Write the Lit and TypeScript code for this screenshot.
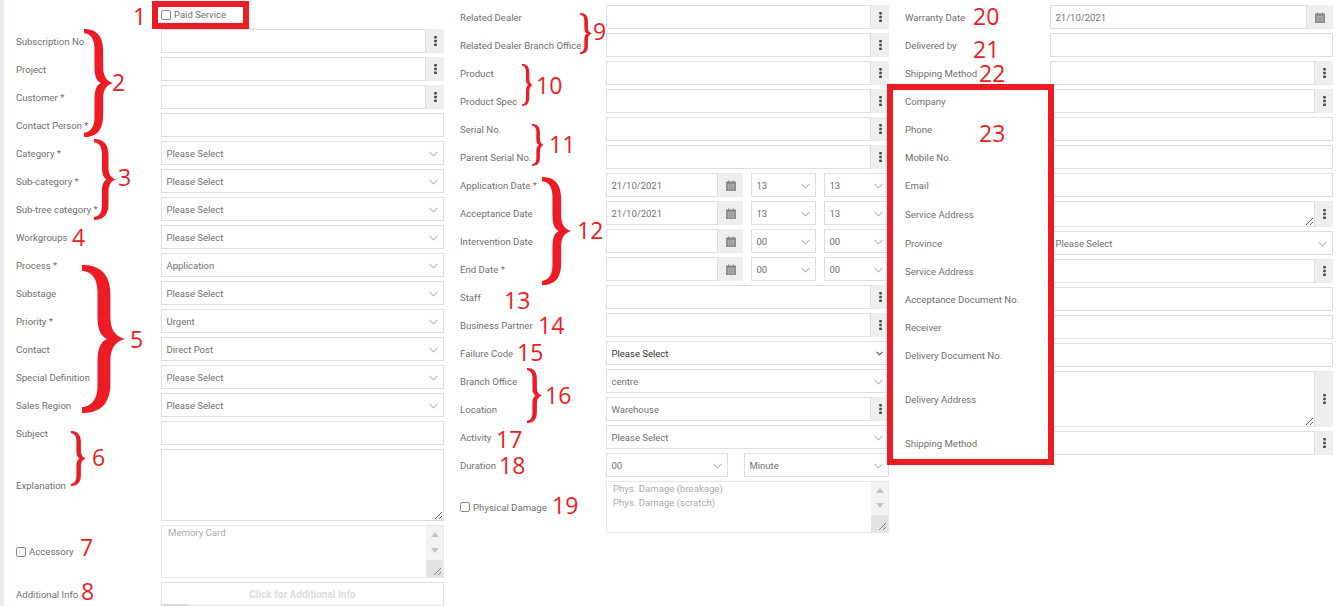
import { LitElement, html, css, svg } from "lit";
import { customElement } from "lit/decorators.js";

type Row = { label: string; kind: string; value?: string; h?: number; check?: boolean; opts?: string[]; a?: string; b?: string };

const r = (label: string, kind: string, value = "", extra: Partial<Row> = {}): Row => ({ label, kind, value, ...extra });

const PS = "Please Select";

const col1: Row[] = [
  r("Subscription No", "more"), r("Project", "more"), r("Customer *", "more"), r("Contact Person *", "text"),
  r("Category *", "select", PS), r("Sub-category *", "select", PS), r("Sub-tree category *", "select", PS),
  r("Workgroups", "select", PS), r("Process *", "select", "Application"), r("Substage", "select", PS),
  r("Priority *", "select", "Urgent"), r("Contact", "select", "Direct Post"), r("Special Definition", "select", PS),
  r("Sales Region", "select", PS), r("Subject", "text"), r("Explanation", "area", "", { h: 72 }),
  r("Accessory", "list", "", { h: 53, check: true, opts: ["Memory Card"] }),
  r("Additional Info", "button", "Click for Additional Info"),
];

const col2: Row[] = [
  r("Related Dealer", "more"), r("Related Dealer Branch Office", "more"), r("Product", "more"), r("Product Spec", "more"),
  r("Serial No.", "more"), r("Parent Serial No.", "more"),
  r("Application Date *", "datetime", "21/10/2021", { a: "13", b: "13" }),
  r("Acceptance Date", "datetime", "21/10/2021", { a: "13", b: "13" }),
  r("Intervention Date", "datetime", "", { a: "00", b: "00" }),
  r("End Date *", "datetime", "", { a: "00", b: "00" }),
  r("Staff", "more"), r("Business Partner", "more"), r("Failure Code", "native", PS),
  r("Branch Office", "select", "centre"), r("Location", "more", "Warehouse"), r("Activity", "select", PS),
  r("Duration", "duration", "", { a: "00", b: "Minute" }),
  r("Physical Damage", "list", "", { h: 52, check: true, opts: ["Phys. Damage (breakage)", "Phys. Damage (scratch)"] }),
];

const col3: Row[] = [
  r("Warranty Date", "date", "21/10/2021"), r("Delivered by", "text"), r("Shipping Method", "more"), r("Company", "more"),
  r("Phone", "text"), r("Mobile No.", "text"), r("Email", "text"),
  r("Service Address", "areamore", "", { h: 26 }), r("Province", "select", PS), r("Service Address", "more"),
  r("Acceptance Document No.", "text"), r("Receiver", "text"), r("Delivery Document No.", "text"),
  r("Delivery Address", "areamore", "", { h: 56 }), r("Shipping Method", "more"),
];

const numbers: [string, number, number][] = [
  ["1", 133, 16], ["2", 112, 82], ["3", 118, 177], ["4", 72, 237], ["5", 130, 339], ["6", 92, 457], ["7", 80, 547], ["8", 81, 591],
  ["9", 593, 31], ["10", 536, 85], ["11", 549, 144], ["12", 577, 230], ["13", 504, 300], ["14", 538, 325], ["15", 517, 352],
  ["16", 545, 395], ["17", 496, 439], ["18", 499, 465], ["19", 552, 505], ["20", 973, 16], ["21", 973, 49], ["22", 979, 73], ["23", 979, 133],
];

const braces: [number, number, number, number][] = [
  [84, 29, 29, 108], [94, 139, 22, 81], [82, 265, 43, 148], [71, 431, 15, 55], [580, 13, 12, 41], [522, 64, 11, 42],
  [532, 124, 12, 42], [542, 177, 29, 108], [527, 368, 15, 55],
];

const bracePath =
  "M0,0 C30,0 66,3 66,20 L66,35 C66,43 75,48 100,50 C75,52 66,57 66,65 L66,80 C66,97 30,100 0,100 L0,96 C18,96 36,92 36,82 L36,66 C36,57 42,52 58,50 C42,48 36,43 36,34 L36,18 C36,8 18,4 0,4 Z";

const chevron = html`<svg class="chev" width="9" height="6" viewBox="0 0 9 6"><path d="M.5 .8 4.500 4.800 8.500 .8" fill="none" stroke="#bdbdbd" stroke-width="1.200"/></svg>`;

const darkChevron = html`<svg class="chevd" width="7" height="5" viewBox="0 0 7 5"><path d="M.5 .8 3.500 3.800 6.500 .8" fill="none" stroke="#555" stroke-width="1.100"/></svg>`;

const dots = html`<svg width="3" height="10" viewBox="0 0 3 10"><g fill="#444"><rect x=".2" y="0" width="2.600" height="2.400" rx=".6"/><rect x=".2" y="3.800" width="2.600" height="2.400" rx=".6"/><rect x=".2" y="7.600" width="2.600" height="2.400" rx=".6"/></g></svg>`;

const cal = html`<svg width="10" height="11" viewBox="0 0 10 11"><path fill="#858585" d="M0 2.200C0 1.700.4 1.400.9 1.400H2V.4h1.200v1H6.800v-1H8v1h1.100c.5 0 .9.3.9.8V10c0 .5-.4 1-.9 1H.9C.4 11 0 10.500 0 10Z"/><path stroke="#ccc" stroke-width=".5" d="M.6 4.200H9.400M.6 6.200H9.400M.6 8.200H9.400M2.700 4V10.700M5 4V10.700M7.300 4V10.700" fill="none"/></svg>`;

const grip = svg`<path d="M1 8 8 1M5 8 8 5" stroke="#666" stroke-width=".8" fill="none"/>`;

@customElement("app-root")
export class AppRoot extends LitElement {
  static styles = css`
    :host { display: block; height: 606px; overflow: hidden; position: relative; background: #fff; font-family: Roboto, "Liberation Sans", sans-serif; font-size: 9.5px; color: #707070; }
    * { box-sizing: border-box; }
    .page { display: flex; height: 606px; border-left: 4px solid #e8ecf3; padding-left: 12px; gap: 16px; }
    .col { width: 428px; display: flex; flex-direction: column; gap: 4px; padding-top: 5px; flex: none; }
    .col.mid { width: 429px; }
    .paid { height: 20px; margin-left: 145px; display: flex; align-items: center; padding-bottom: 1px; }
    .row { display: grid; grid-template-columns: 145px 283px; align-items: center; }
    .mid .row { grid-template-columns: 146px 283px; }
    .lab { white-space: nowrap; display: flex; align-items: center; font-size: 9.600px; }
    .cb { appearance: none; margin: 0 3px 0 0; width: 10px; height: 10px; border: 1px solid #8a8a8a; border-radius: 2px; background: #fff; flex: none; }
    .ctl { height: 24px; display: flex; width: 283px; position: relative; }
    .box { flex: 1; min-width: 0; height: 100%; border: 1px solid #dedede; background: #fff; padding: 0 4.500px; display: flex; align-items: center; color: #707070; font: inherit; outline: none; position: relative; white-space: nowrap; }
    textarea.box { display: block; resize: both; margin: 0; }
    .addon { width: 18px; flex: none; background: #eee; display: flex; align-items: center; justify-content: center; }
    .addon.wide { width: 26px; }
    .chev { position: absolute; right: 5px; top: 9px; }
    .chevd { position: absolute; right: 6px; top: 10px; pointer-events: none; }
    .dategroup { display: flex; width: 137px; height: 24px; flex: none; }
    .dategroup .addon { width: 25px; }
    .dt { gap: 8px; }
    .dt .sel { width: 65px; flex: none; }
    .dur { gap: 16px; }
    .dur .sel:first-child { flex: none; width: 122px; }
    .native { appearance: none; flex: 1; height: 24px; border: 1px solid #dedede; background: #fff; color: #333; font: inherit; padding: 0 4.500px; outline: none; border-radius: 0; }
    .list { width: 283px; border: 1px solid #e8e8e8; display: flex; background: #fff; }
    .opts { flex: 1; padding: 0 6px; color: #aaa; font-size: 9.600px; line-height: 13.500px; }
    .bar { width: 17px; flex: none; background: #f3f3f3; display: flex; flex-direction: column; align-items: center; }
    .arrows { flex: 1; display: flex; flex-direction: column; align-items: center; justify-content: space-around; padding: 1px 0 2px; }
    .thumb { height: 17px; width: 17px; background: #e3e3e3; display: flex; align-items: flex-end; justify-content: flex-end; padding: 0 1px 1px 0; }
    .btn { width: 283px; height: 24px; border: 1px solid #dedede; background: #fff; color: #dcdcdc; font: 700 10px Roboto, sans-serif; display: flex; align-items: center; justify-content: center; position: relative; padding: 0; }
    .btn::after { content: ""; position: absolute; left: -1px; bottom: -1px; width: 27px; height: 2px; background: #d8d8d8; }
    .marks { position: absolute; inset: 0; pointer-events: none; }
    .num { position: absolute; color: #ed1c24; font: 400 23px/18px "Open Sans", sans-serif; transform: translateY(-50%); }
    .brace { position: absolute; display: block; }
    .frame { position: absolute; border: 6px solid #ed1c24; }
    .frame.a { left: 152px; top: 1px; width: 97px; height: 28px; }
    .frame.b { left: 887px; top: 84px; width: 167px; height: 381px; }
  `;

  private list(o: string[]) {
    return html`<div class="list" style="height:100%">
      <div class="opts">${o.map((t) => html`<div>${t}</div>`)}</div>
      <div class="bar">
        <div class="arrows">
          <svg width="8" height="5" viewBox="0 0 8 5"><path d="M0 5 4 0 8 5Z" fill="#c4c4c4"/></svg>
          <svg width="8" height="5" viewBox="0 0 8 5"><path d="M0 0 4 5 8 0Z" fill="#c4c4c4"/></svg>
        </div>
        <div class="thumb"><svg width="9" height="9" viewBox="0 0 9 9">${grip}</svg></div>
      </div>
    </div>`;
  }

  private sel(v: string) {
    return html`<div class="box sel">${v}${chevron}</div>`;
  }

  private control(x: Row) {
    switch (x.kind) {
      case "text":
        return html`<div class="ctl"><input class="box" /></div>`;
      case "more":
        return html`<div class="ctl">
          ${x.value ? html`<div class="box">${x.value}</div>` : html`<input class="box" />`}
          <div class="addon">${dots}</div>
        </div>`;
      case "select":
        return html`<div class="ctl">${this.sel(x.value!)}</div>`;
      case "native":
        return html`<div class="ctl"><select class="native"><option>${x.value}</option></select>${darkChevron}</div>`;
      case "date":
        return html`<div class="ctl">
          <div class="box">${x.value}</div>
          <div class="addon wide">${cal}</div>
        </div>`;
      case "datetime":
        return html`<div class="ctl dt">
          <div class="dategroup"><div class="box">${x.value}</div><div class="addon">${cal}</div></div>
          ${this.sel(x.a!)}${this.sel(x.b!)}
        </div>`;
      case "duration":
        return html`<div class="ctl dur">${this.sel(x.a!)}${this.sel(x.b!)}</div>`;
      case "area":
        return html`<div class="ctl" style="height:${x.h}px"><textarea class="box"></textarea></div>`;
      case "areamore":
        return html`<div class="ctl" style="height:${x.h}px"><textarea class="box"></textarea><div class="addon">${dots}</div></div>`;
      case "list":
        return html`<div class="ctl" style="height:${x.h}px">${this.list(x.opts!)}</div>`;
      case "button":
        return html`<button class="btn">${x.value}</button>`;
    }
    return null;
  }

  private row(x: Row) {
    return html`<div class="row">
      <div class="lab">${x.check ? html`<input type="checkbox" class="cb" />` : null}${x.label}</div>
      ${this.control(x)}
    </div>`;
  }

  render() {
    return html`
      <div class="page">
        <div class="col">
          <div class="paid"><input type="checkbox" class="cb" />Paid Service</div>
          ${col1.map((x) => this.row(x))}
        </div>
        <div class="col mid">${col2.map((x) => this.row(x))}</div>
        <div class="col">${col3.map((x) => this.row(x))}</div>
      </div>
      <div class="marks">
        <div class="frame a"></div>
        <div class="frame b"></div>
        ${braces.map(
          ([x, y, w, h]) => html`<svg class="brace" style="left:${x}px;top:${y}px" width=${w} height=${h} viewBox="0 0 100 100" preserveAspectRatio="none"><path d=${bracePath} fill="#ed1c24"/></svg>`
        )}
        ${numbers.map(([t, x, y]) => html`<div class="num" style="left:${x}px;top:${y}px">${t}</div>`)}
      </div>
    `;
  }
}
